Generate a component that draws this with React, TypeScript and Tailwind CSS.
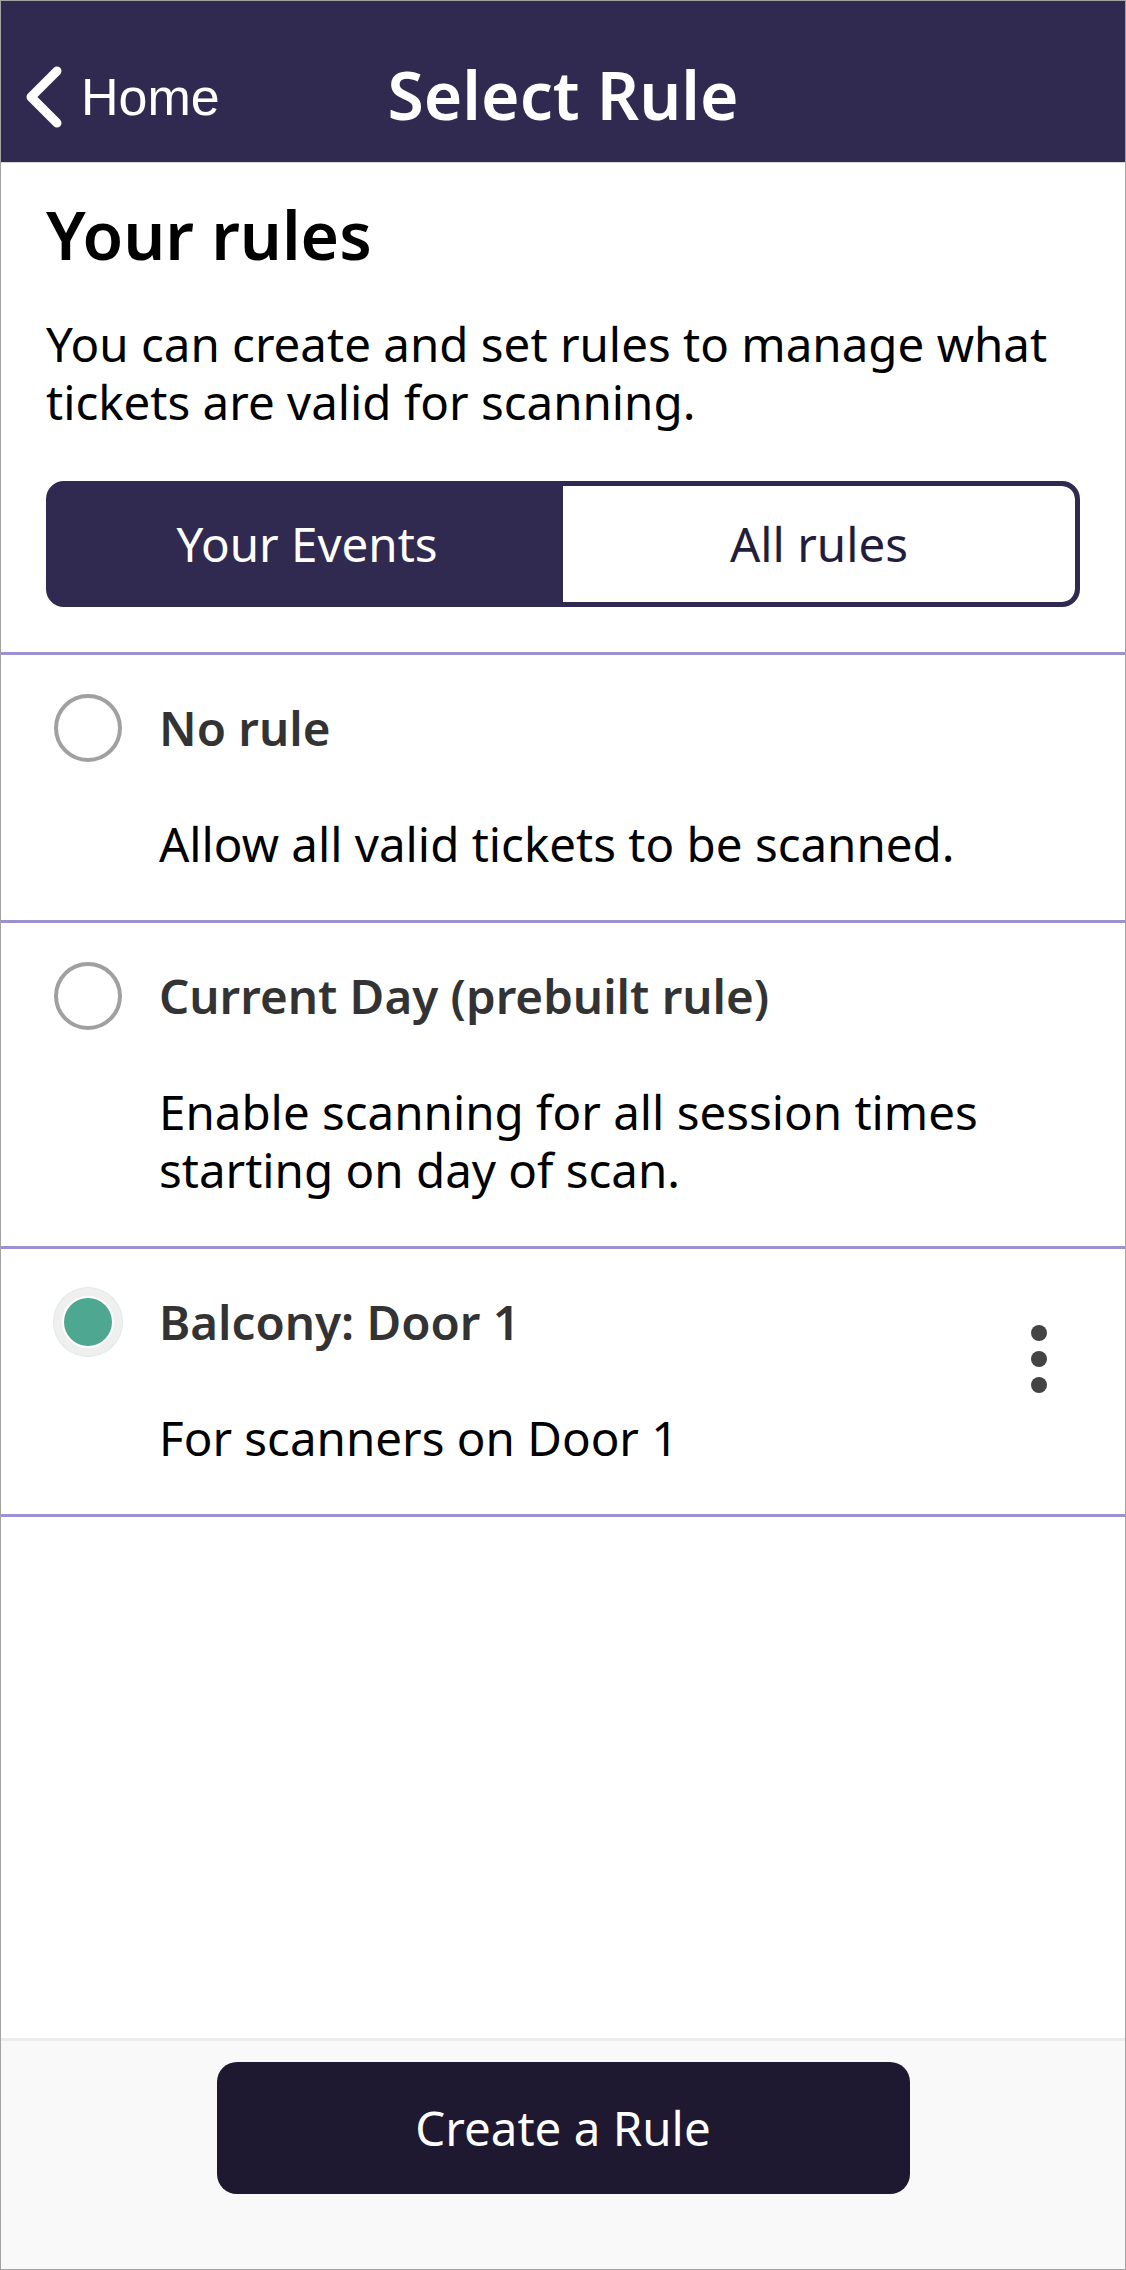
import React from "react";

const rules = [
  {
    id: "none",
    title: "No rule",
    description: "Allow all valid tickets to be scanned.",
    selected: false,
    menu: false,
  },
  {
    id: "current-day",
    title: "Current Day (prebuilt rule)",
    description: "Enable scanning for all session times starting on day of scan.",
    selected: false,
    menu: false,
  },
  {
    id: "balcony",
    title: "Balcony: Door 1",
    description: "For scanners on Door 1",
    selected: true,
    menu: true,
  },
];

function Radio({ checked }: { checked: boolean }) {
  if (checked) {
    return (
      <div className="w-[68px] h-[68px] rounded-full border-[8px] border-[#efefef] bg-white flex items-center justify-center shadow-[0_0_0_1px_#dcebe6]">
        <div className="w-[48px] h-[48px] rounded-full bg-[#4ea790]" />
      </div>
    );
  }
  return <div className="w-[68px] h-[68px] rounded-full border-[4px] border-[#a0a0a0] bg-white" />;
}

function MoreIcon() {
  return (
    <svg width="16" height="68" viewBox="0 0 16 68" fill="#444444">
      <circle cx="8" cy="8" r="8" />
      <circle cx="8" cy="34" r="8" />
      <circle cx="8" cy="60" r="8" />
    </svg>
  );
}

function RuleRow({ rule }: { rule: (typeof rules)[number] }) {
  return (
    <div className="flex pl-[53px] pr-[78px] pt-[40px] pb-[47px] border-b-[3px] border-[#9a92d3]">
      <div className="w-[68px] h-[65px] flex items-center shrink-0">
        <Radio checked={rule.selected} />
      </div>
      <div className="ml-[37px] flex-1">
        <div className="text-[47.5px] leading-[65px] font-semibold text-[#333333]">{rule.title}</div>
        <p className="mt-[55px] text-[47.5px] leading-[58px] text-black">{rule.description}</p>
      </div>
      {rule.menu && (
        <div className="pt-[36px] shrink-0">
          <MoreIcon />
        </div>
      )}
    </div>
  );
}

export default function App() {
  return (
    <div
      className="h-[2270px] w-[1126px] flex flex-col border border-[#a3a3a3] bg-white"
      style={{ fontFamily: '"Noto Sans", "Open Sans", sans-serif' }}
    >
      <header className="h-[162px] shrink-0 bg-[#312a50] pt-[31px] border-b border-[#d8d8d8]">
        <div className="h-[130px] grid grid-cols-[1fr_auto_1fr] items-center">
          <button className="flex items-center pl-[25px] gap-[19px] text-white">
            <svg width="36" height="62" viewBox="0 0 36 62" fill="none">
              <path
                d="M31 5 L5 31 L31 57"
                stroke="white"
                strokeWidth="9"
                strokeLinecap="round"
                strokeLinejoin="round"
              />
            </svg>
            <span
              className="text-[52px] leading-none"
              style={{ fontFamily: '"Liberation Sans", Arial, sans-serif' }}
            >
              Home
            </span>
          </button>
          <h1 className="mb-[6px] text-[66px] font-semibold text-white leading-none">Select Rule</h1>
          <div />
        </div>
      </header>

      <main className="flex-1">
        <section className="px-[45px]">
          <h2 className="mt-[22px] text-[66px] font-semibold text-black">Your rules</h2>
          <p className="mt-[31px] text-[47.5px] leading-[58px] text-black">
            You can create and set rules to manage what tickets are valid for scanning.
          </p>
          <div className="mt-[50px] h-[126px] flex rounded-[18px] border-[5px] border-[#312a50] bg-[#312a50] overflow-hidden">
            <button className="flex-1 text-[47.5px] text-white">Your Events</button>
            <button className="flex-1 text-[47.5px] text-[#231d3c] bg-white rounded-r-[13px]">All rules</button>
          </div>
        </section>

        <div className="mt-[45px] border-t-[3px] border-[#9a92d3]">
          {rules.map((rule) => (
            <RuleRow key={rule.id} rule={rule} />
          ))}
        </div>
      </main>

      <footer className="h-[231px] shrink-0 border-t-[3px] border-[#ececec] bg-[#f9f9f9] pt-[21px] flex justify-center items-start">
        <button className="w-[693px] h-[132px] rounded-[20px] bg-[#1e1830] text-white text-[47.5px]">
          Create a Rule
        </button>
      </footer>
    </div>
  );
}
